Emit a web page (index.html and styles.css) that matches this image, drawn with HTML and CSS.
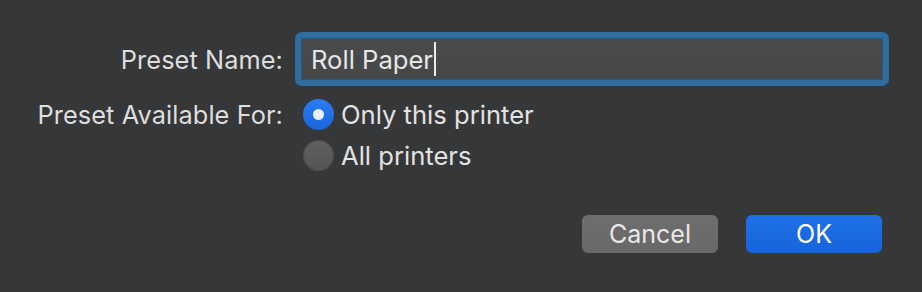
FILE: index.html
```html
<!DOCTYPE html>
<html>
<head>
<meta charset="utf-8">
<link rel="stylesheet" href="styles.css">
</head>
<body>
<div class="dialog">
  <div class="row row-name">
    <label class="label">Preset Name:</label>
    <div class="field"><span class="field-text">Roll Paper</span><span class="caret"></span></div>
  </div>
  <div class="row row-avail">
    <div class="label label-avail">Preset Available For:</div>
    <div class="radios">
      <div class="radio-row"><span class="radio radio-on"><span class="dot"></span></span><span class="radio-text">Only this printer</span></div>
      <div class="radio-row"><span class="radio radio-off"></span><span class="radio-text">All printers</span></div>
    </div>
  </div>
  <div class="buttons">
    <div class="btn btn-cancel">Cancel</div>
    <div class="btn btn-ok">OK</div>
  </div>
</div>
</body>
</html>
```
FILE: styles.css
```css
html, body {
  margin: 0;
  padding: 0;
  width: 922px;
  height: 292px;
  overflow: hidden;
  background: #363738;
  font-family: "Inter", "Liberation Sans", sans-serif;
  color: #dedede;
}
.dialog {
  padding: 32px 33px 0 0;
  display: flex;
  flex-direction: column;
}
.row {
  display: grid;
  grid-template-columns: 283px 1fr;
  column-gap: 12px;
}
.row-name {
  align-items: center;
}
.label {
  text-align: right;
  font-size: 25.3px;
  letter-spacing: 0.1px;
}
.field {
  height: 42px;
  border: 6px solid #2f6e9f;
  border-radius: 7px;
  background: linear-gradient(#4a4b4c, #454647);
  box-shadow: inset 0 0 0 1px #2a5678;
  display: flex;
  align-items: center;
  padding-left: 10px;
}
.field-text {
  font-size: 25.6px;
  color: #e6e6e6;
}
.caret {
  display: inline-block;
  width: 2px;
  height: 34px;
  background: #ececec;
  margin-left: 1px;
}
.row-avail {
  margin-top: 8px;
  align-items: start;
}
.label-avail {
  line-height: 41px;
}
.radios {
  display: flex;
  flex-direction: column;
  margin-left: 8px;
}
.radio-row {
  height: 41px;
  display: flex;
  align-items: center;
  gap: 7px;
}
.radio {
  width: 31px;
  height: 31px;
  border-radius: 50%;
  box-sizing: border-box;
  display: flex;
  align-items: center;
  justify-content: center;
}
.radio-on {
  background: linear-gradient(#2a7df3, #1b64da);
}
.radio-off {
  background: linear-gradient(#606062, #545456);
  box-shadow: inset 0 0 0 1px #4a4a4c;
}
.dot {
  width: 11px;
  height: 11px;
  border-radius: 50%;
  background: #e9effb;
}
.radio-text {
  font-size: 25.6px;
  color: #e2e2e2;
}
.buttons {
  display: flex;
  justify-content: flex-end;
  gap: 28px;
  margin-top: 39px;
  margin-right: 7px;
}
.btn {
  width: 136px;
  height: 38px;
  border-radius: 6px;
  display: flex;
  align-items: center;
  justify-content: center;
  font-size: 25px;
  box-sizing: border-box;
}
.btn-cancel {
  background: linear-gradient(#6e6e6e, #686868);
  color: #e8e8e8;
}
.btn-ok {
  background: linear-gradient(#1f70e8, #1664db);
  color: #ffffff;
}
```
